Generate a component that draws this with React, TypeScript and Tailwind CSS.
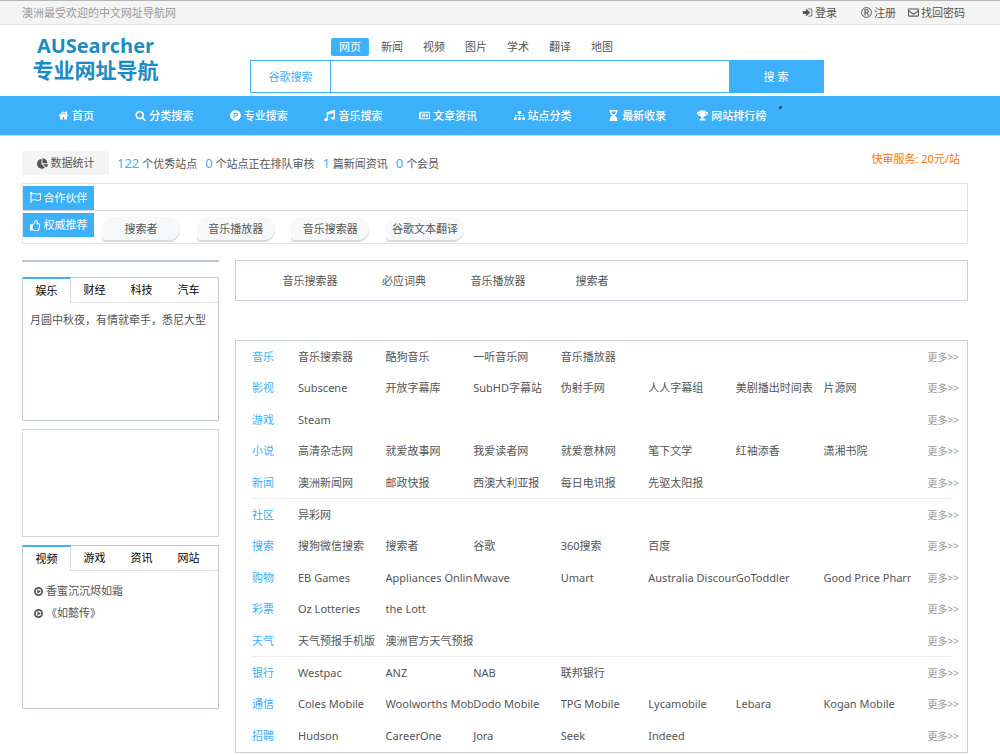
import type { ComponentType, ReactNode } from "react";
import {
  FaChartPie,
  FaHourglassEnd,
  FaMusic,
  FaProductHunt,
  FaRegEnvelope,
  FaRegFlag,
  FaRegNewspaper,
  FaRegThumbsUp,
  FaSitemap,
  FaTrophy,
} from "react-icons/fa";

type IconType = ComponentType<{ className?: string }>;

function glyph(d: string): IconType {
  return function Glyph({ className }) {
    return (
      <svg viewBox="0 0 1792 1792" width="1em" height="1em" fill="currentColor" className={className} aria-hidden="true">
        <path d={d} />
      </svg>
    );
  };
}

const HomeIcon = glyph(
  "M1472 992v480q0 26-19 45t-45 19h-384v-384h-256v384h-384q-26 0-45-19t-19-45v-480q0-1 .5-3t.5-3l575-474 575 474q1 2 1 6zm223-69l-62 74q-8 9-21 11h-3q-13 0-21-7l-692-577-692 577q-12 8-24 7-13-2-21-11l-62-74q-8-10-7-23.5t11-21.5l719-599q32-26 76-26t76 26l244 204v-195q0-14 9-23t23-9h192q14 0 23 9t9 23v408l219 182q10 8 11 21.5t-7 23.5z",
);
const SearchIcon = glyph(
  "M1216 832q0-185-131.5-316.5t-316.5-131.5-316.5 131.5-131.5 316.5 131.5 316.5 316.5 131.5 316.5-131.5 131.5-316.5zm512 832q0 52-38 90t-90 38q-54 0-90-38l-343-342q-179 124-399 124-143 0-273.5-55.5t-225-150-150-225-55.5-273.5 55.5-273.5 150-225 225-150 273.5-55.5 273.5 55.5 225 150 150 225 55.5 273.5q0 220-124 399l343 343q37 37 37 90z",
);
const SignInIcon = glyph(
  "M1312 896q0 26-19 45l-544 544q-19 19-45 19t-45-19-19-45v-288h-448q-26 0-45-19t-19-45v-384q0-26 19-45t45-19h448v-288q0-26 19-45t45-19 45 19l544 544q19 19 19 45zm352-352v704q0 119-84.5 203.5t-203.5 84.5h-320q-13 0-22.5-9.5t-9.5-22.5q0-4-1-20t-.5-26.5 3-23.5 10-19.5 20.5-6.5h320q66 0 113-47t47-113v-704q0-66-47-113t-113-47h-312l-11.5-1-11.5-3-8-5.5-7-9-2-13.5q0-4-1-20t-.5-26.5 3-23.5 10-19.5 20.5-6.5h320q119 0 203.5 84.5t84.5 203.5z",
);

function RegisteredIcon({ className }: { className?: string }) {
  return (
    <svg viewBox="0 0 22 22" width="1em" height="1em" fill="none" stroke="currentColor" strokeWidth="2" className={className} aria-hidden="true">
      <circle cx="11" cy="11" r="9.8" />
      <path d="M8 17V5.5h3.6a2.9 2.9 0 0 1 0 6H8m3.6 0L15 17" strokeWidth="2.2" />
    </svg>
  );
}

function PlayIcon({ className }: { className?: string }) {
  return (
    <svg viewBox="0 0 20 20" width="1em" height="1em" className={className} aria-hidden="true">
      <circle cx="10" cy="10" r="8" fill="none" stroke="currentColor" strokeWidth="4" />
      <path d="M7.5 5v10l7.5-5z" fill="currentColor" />
    </svg>
  );
}

const account: { label: string; icon: IconType; className: string }[] = [
  { label: "登录", icon: SignInIcon, className: "mr-6" },
  { label: "注册", icon: RegisteredIcon, className: "mr-3" },
  { label: "找回密码", icon: FaRegEnvelope, className: "" },
];

const engines = ["网页", "新闻", "视频", "图片", "学术", "翻译", "地图"];

const nav: { label: string; icon: IconType }[] = [
  { label: "分类搜索", icon: SearchIcon },
  { label: "专业搜索", icon: FaProductHunt },
  { label: "音乐搜索", icon: FaMusic },
  { label: "文章资讯", icon: FaRegNewspaper },
  { label: "站点分类", icon: FaSitemap },
  { label: "最新收录", icon: FaHourglassEnd },
  { label: "网站排行榜", icon: FaTrophy },
];

const stats = [
  ["122", "个优秀站点"],
  ["0", "个站点正在排队审核"],
  ["1", "篇新闻资讯"],
  ["0", "个会员"],
];

const groups: { name: string; sites: string[] }[][] = [
  [
    { name: "音乐", sites: ["音乐搜索器", "酷狗音乐", "一听音乐网", "音乐播放器"] },
    { name: "影视", sites: ["Subscene", "开放字幕库", "SubHD字幕站", "伪射手网", "人人字幕组", "美剧播出时间表", "片源网"] },
    { name: "游戏", sites: ["Steam"] },
    { name: "小说", sites: ["高清杂志网", "就爱故事网", "我爱读者网", "就爱意林网", "笔下文学", "红袖添香", "潇湘书院"] },
    { name: "新闻", sites: ["澳洲新闻网", "邮政快报", "西澳大利亚报", "每日电讯报", "先驱太阳报"] },
  ],
  [
    { name: "社区", sites: ["异彩网"] },
    { name: "搜索", sites: ["搜狗微信搜索", "搜索者", "谷歌", "360搜索", "百度"] },
    {
      name: "购物",
      sites: ["EB Games", "Appliances Online", "Mwave", "Umart", "Australia Discount", "GoToddler", "Good Price Pharmacy"],
    },
    { name: "彩票", sites: ["Oz Lotteries", "the Lott"] },
    { name: "天气", sites: ["天气预报手机版", "澳洲官方天气预报"] },
  ],
  [
    { name: "银行", sites: ["Westpac", "ANZ", "NAB", "联邦银行"] },
    {
      name: "通信",
      sites: ["Coles Mobile", "Woolworths Mobile", "Dodo Mobile", "TPG Mobile", "Lycamobile", "Lebara", "Kogan Mobile"],
    },
    { name: "招聘", sites: ["Hudson", "CareerOne", "Jora", "Seek", "Indeed"] },
  ],
];

function TabBox({ tabs, className, children }: { tabs: string[]; className: string; children: ReactNode }) {
  return (
    <section className={`border border-[#c3cad6] ${className}`}>
      <div className="-mt-px flex text-black" role="tablist">
        {tabs.map((tab, i) => (
          <button
            key={tab}
            type="button"
            role="tab"
            aria-selected={i === 0}
            className={
              i === 0
                ? "h-[26px] w-12 border-t-2 border-r border-t-[#3cb0f8] border-r-[#d5dae2] bg-white"
                : "h-[26px] w-[47px] border-t border-b border-t-[#c3cad6] border-b-[#dde1e6]"
            }
          >
            {tab}
          </button>
        ))}
        <span className="flex-1 border-t border-b border-t-[#c3cad6] border-b-[#dde1e6]" />
      </div>
      {children}
    </section>
  );
}

function Ribbon({ icon: Icon, label }: { icon: IconType; label: string }) {
  return (
    <h2 className="flex h-6 w-[71px] shrink-0 items-center justify-center gap-[3px] bg-[#3cb0f8] text-white">
      <Icon className="text-[11px]" />
      {label}
    </h2>
  );
}

export default function App() {
  return (
    <div className="min-h-screen bg-white font-['Noto_Sans','Noto_Sans_CJK_SC',sans-serif] text-[11px] leading-4 text-[#555]">
      <div className="flex h-[25px] items-center justify-between border-t border-b border-t-[#b8b8b8] border-b-[#e2e2e2] bg-[#f4f4f4] pr-[35px] pl-[22px]">
        <p className="text-[#999]">澳洲最受欢迎的中文网址导航网</p>
        <div className="flex">
          {account.map(({ label, icon: Icon, className }) => (
            <a key={label} href="#" className={`flex items-center gap-[2px] ${className}`}>
              <Icon />
              {label}
            </a>
          ))}
        </div>
      </div>

      <header className="flex h-[71px] pl-[22px]">
        <h1 className="w-[228px] shrink-0 pt-[9px] pl-[10px] font-bold text-[#1a8bc4]">
          <a href="#" className="flex w-[127px] flex-col items-center">
            <span className="font-['Open_Sans'] text-[20px] leading-6">AUSearcher</span>
            <span className="text-[21px] leading-6">专业网址导航</span>
          </a>
        </h1>
        <form className="w-[574px] pt-[13px]" onSubmit={(e) => e.preventDefault()}>
          <div className="flex h-[22px] gap-1 pl-[81px]">
            {engines.map((name, i) => (
              <button
                key={name}
                type="button"
                className={i === 0 ? "h-[18px] w-[38px] rounded-xs bg-[#3cb0f8] text-white" : "h-[18px] w-[38px]"}
              >
                {name}
              </button>
            ))}
          </div>
          <div className="flex h-[33px] border border-[#3cb0f8]">
            <label htmlFor="query" className="flex w-20 items-center justify-center border-r border-[#3cb0f8] text-[#3cb0f8]">
              谷歌搜索
            </label>
            <input id="query" type="text" className="min-w-0 flex-1 px-2 outline-none" />
            <button type="submit" className="w-[94px] bg-[#3cb0f8] text-[11px] text-white">
              搜 索
            </button>
          </div>
        </form>
      </header>

      <nav className="relative flex h-10 items-center border-b border-[#b5e0fc] bg-[#3cb0f8] pl-[35px] font-medium text-white">
        <a href="#" className="flex w-[82px] items-center justify-center gap-[3px]">
          <HomeIcon />
          首页
        </a>
        <div className="grid w-[662px] grid-cols-7">
          {nav.map(({ label, icon: Icon }) => (
            <a key={label} href="#" className="flex items-center justify-center gap-[3px]">
              <Icon className="text-[11px]" />
              {label}
            </a>
          ))}
        </div>
        <span className="absolute top-2.5 left-[779px] size-[3px] rounded-full bg-[#1f4a68]" />
      </nav>

      <main className="pr-8 pl-[22px]">
        <div className="mt-[15px] flex items-center">
          <h2 className="flex h-6 w-[87px] items-center justify-center gap-[3px] bg-[#f4f4f4]">
            <FaChartPie />
            数据统计
          </h2>
          <p className="ml-2 flex gap-2">
            {stats.map(([count, label]) => (
              <span key={label}>
                <span className="text-[13px] text-[#3cb0f8]">{count}</span> {label}
              </span>
            ))}
          </p>
          <a href="#" className="mr-2 ml-auto pb-2 text-[#ff7200]">
            快审服务: 20元/站
          </a>
        </div>

        <div className="mt-2 border border-[#e0e3e3]">
          <div className="flex h-[27px] items-center border-b border-[#d5dada] pt-px">
            <Ribbon icon={FaRegFlag} label="合作伙伴" />
          </div>
          <div className="flex h-8 items-start gap-2 pt-[2px]">
            <Ribbon icon={FaRegThumbsUp} label="权威推荐" />
            <div className="flex w-[362px] justify-between pt-1">
              {["搜索者", "音乐播放器", "音乐搜索器", "谷歌文本翻译"].map((name) => (
                <a
                  key={name}
                  href="#"
                  className="flex h-[23px] w-[78px] items-center justify-center rounded-tl-xl rounded-r-xl rounded-bl-sm bg-[#f6f8fa] shadow-[0_2px_1px_#d9dcda]"
                >
                  {name}
                </a>
              ))}
            </div>
          </div>
        </div>

        <div className="mt-4 flex items-start gap-4">
          <aside className="flex w-[197px] shrink-0 flex-col border-t-2 border-[#b9c6d4] pt-[15px]">
            <TabBox tabs={["娱乐", "财经", "科技", "汽车"]} className="h-36">
              <a href="#" className="mt-[9px] ml-[7px] block whitespace-nowrap">
                月圆中秋夜，有情就牵手，悉尼大型
              </a>
            </TabBox>
            <div className="mt-2 h-[108px] border border-[#d3d6da]" />
            <TabBox tabs={["视频", "游戏", "资讯", "网站"]} className="mt-2 h-[164px]">
              <ul className="mt-[9px] ml-[11px]">
                {["香蜜沉沉烬如霜", "《如懿传》"].map((title) => (
                  <li key={title}>
                    <a href="#" className="flex h-[22px] items-center gap-[3px]">
                      <PlayIcon className="text-[9px]" />
                      {title}
                    </a>
                  </li>
                ))}
              </ul>
            </TabBox>
          </aside>

          <div className="min-w-0 flex-1">
            <div className="flex h-[41px] items-center border border-[#cbd1da] pl-[27px]">
              {["音乐搜索器", "必应词典", "音乐播放器", "搜索者"].map((name) => (
                <a key={name} href="#" className="w-[94px] text-center">
                  {name}
                </a>
              ))}
            </div>
            <div className="mt-[39px] border border-[#cbd1da] px-4 pb-px">
              {groups.map((rows) => (
                <div key={rows[0].name} className="border-b border-[#eeeeee] last:border-b-0">
                  {rows.map(({ name, sites }) => (
                    <div key={name} className="-mr-2 flex items-center odd:h-[31px] even:h-8">
                      <a href="#" className="w-[46px] shrink-0 text-[#3cb0f8]">
                        {name}
                      </a>
                      <div className="grid min-w-0 flex-1 grid-cols-7">
                        {sites.map((site) => (
                          <a key={site} href="#" className="overflow-hidden whitespace-nowrap">
                            {site}
                          </a>
                        ))}
                      </div>
                      <a href="#" className="ml-4 w-8 shrink-0 text-right text-[10px] whitespace-nowrap text-[#999]">
                        更多&gt;&gt;
                      </a>
                    </div>
                  ))}
                </div>
              ))}
            </div>
          </div>
        </div>
      </main>
    </div>
  );
}
